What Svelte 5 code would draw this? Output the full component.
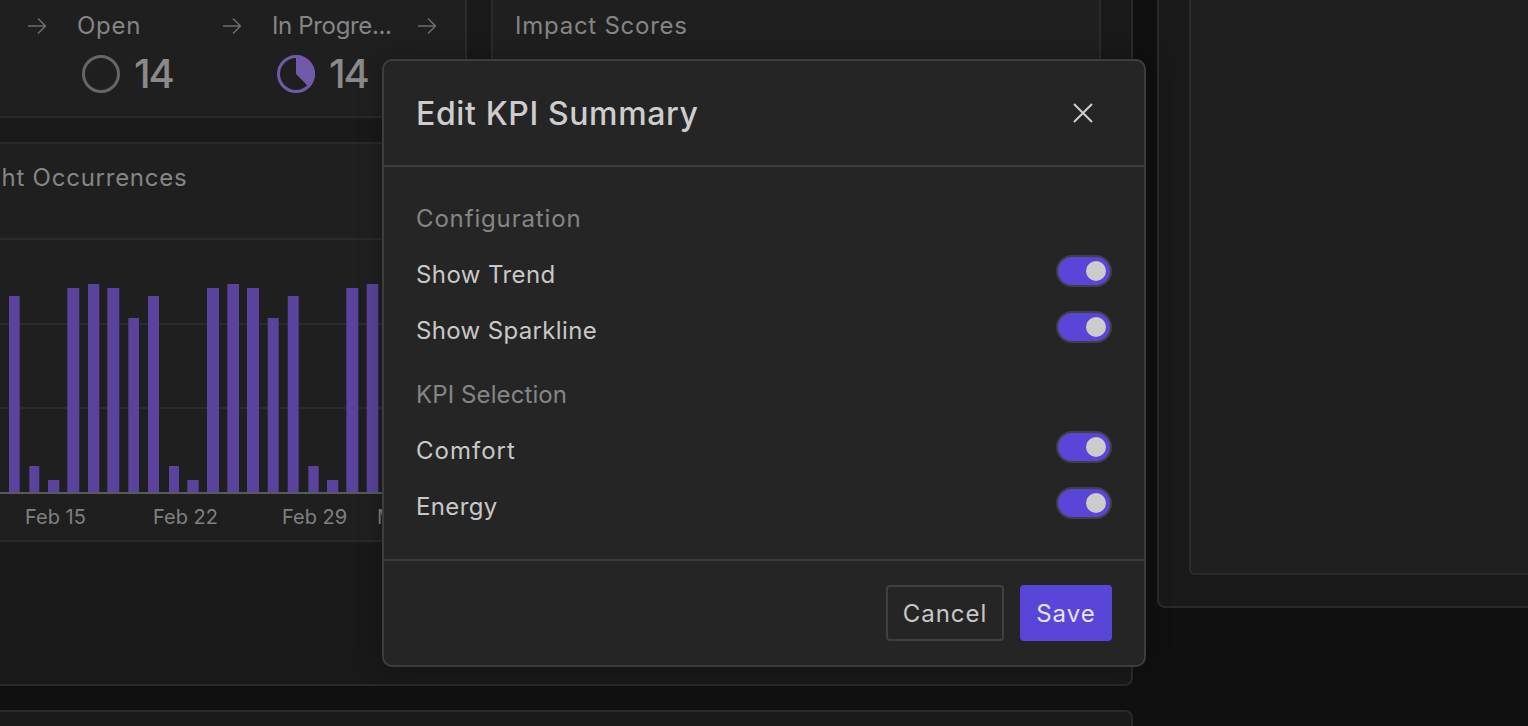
<script>
  const bars = [
    [9, 10.7, 296], [29.3, 10, 466], [48, 11.3, 480], [67.3, 12, 288], [88, 11.3, 284], [107.3, 12, 288],
    [128.3, 10.7, 318], [148, 11, 296], [169, 10, 466], [187.3, 11.4, 480], [207, 12, 288], [227.3, 11.7, 284],
    [247, 12, 288], [267.7, 11, 318], [287.7, 11, 296], [308.3, 10.4, 466], [327, 11.3, 480], [346.3, 12, 288],
    [366.7, 11.6, 284]
  ];
  const ticks = [[25, 'Feb 15'], [153, 'Feb 22'], [282, 'Feb 29'], [377, 'Mar 7']];
  const steps = [
    { label: 'Open', value: 14, kind: 'open', ls: 0.7 },
    { label: 'In Progre...', value: 14, kind: 'progress', ls: -0.35 }
  ];
  const sections = [
    { title: 'Configuration', ls: 0.85, rows: [['Show Trend', 0.4], ['Show Sparkline', 0.35]] },
    { title: 'KPI Selection', ls: 0.1, rows: [['Comfort', 1], ['Energy', 0.35]] }
  ];
</script>

{#snippet arrow()}
  <svg class="arrow" width="18" height="16" viewBox="0 0 18 16" fill="none" stroke="#6e6e6e" stroke-width="1.5"><path d="M0 8H17.5M10 .5L17.5 8L10 15.5" /></svg>
{/snippet}

<div class="page">
  <div class="shell">
    <div class="left">
      <section class="panel main">
        <div class="toprow">
          <div class="card status">
            {#each steps as s}
              <div class="step">
                {@render arrow()}
                <span class="steplabel" style="letter-spacing:{s.ls}px">{s.label}</span>
                <div class="value">
                  {#if s.kind === 'open'}
                    <svg width="38" height="38" viewBox="0 0 38 38" fill="none"><circle cx="19" cy="19" r="17.5" stroke="#666" stroke-width="3" /></svg>
                  {:else}
                    <svg width="38" height="38" viewBox="0 0 38 38" fill="none"><circle cx="19" cy="19" r="17.5" stroke="#7059a8" stroke-width="3" /><path d="M19 19V0A19 19 0 0 1 32.4 32.4Z" fill="#7059a8" /></svg>
                  {/if}
                  <span class="num">{s.value}</span>
                </div>
              </div>
            {/each}
            <div class="step">{@render arrow()}</div>
          </div>
          <div class="card impact"><h3>Impact Scores</h3></div>
        </div>
        <div class="card chart">
          <h3 class="charttitle">Insight Occurrences</h3>
          <svg class="plot" width="1465" height="303" viewBox="-366 240 1465 303">
            <line x1="-366" x2="1099" y1="324" y2="324" stroke="#2a2a2a" stroke-width="2" />
            <line x1="-366" x2="1099" y1="408" y2="408" stroke="#2a2a2a" stroke-width="2" />
            {#each bars as b}
              <rect x={b[0]} y={b[2]} width={b[1]} height={492 - b[2]} fill="#5a439c" />
            {/each}
            <line x1="-366" x2="1099" y1="493" y2="493" stroke="#5a5a58" stroke-width="2" />
            {#each ticks as t}
              <text x={t[0]} y="524" class="tick">{t[1]}</text>
            {/each}
          </svg>
        </div>
      </section>
      <section class="panel next"></section>
    </div>
    <section class="panel side"><div class="card sideinner"></div></section>
  </div>

  <div class="modal">
    <header class="mhead">
      <h2>Edit KPI Summary</h2>
      <svg width="20" height="20" viewBox="0 0 20 20" fill="none" stroke="#cfcfcf" stroke-width="2"><path d="M1 1L19 19M19 1L1 19" /></svg>
    </header>
    <div class="mbody">
      {#each sections as sec, i}
        <div class="seclabel" class:later={i > 0} style="letter-spacing:{sec.ls}px">{sec.title}</div>
        {#each sec.rows as r}
          <div class="row">
            <span style="letter-spacing:{r[1]}px">{r[0]}</span>
            <span class="toggle"><span class="knob"></span></span>
          </div>
        {/each}
      {/each}
    </div>
    <footer class="mfoot">
      <button class="btn cancel">Cancel</button>
      <button class="btn save">Save</button>
    </footer>
  </div>
</div>

<style>
  :global(body) {
    margin: 0;
    background: #101010;
    font-family: Inter, "Open Sans", "Liberation Sans", sans-serif;
  }
  .page {
    position: relative;
    width: 1528px;
    height: 726px;
    overflow: hidden;
    background: #101010;
  }
  .shell {
    display: grid;
    grid-template-columns: 1533px 800px;
    column-gap: 24px;
    align-items: start;
    margin: -60px 0 0 -400px;
  }
  .left {
    display: flex;
    flex-direction: column;
    gap: 24px;
  }
  .panel {
    box-sizing: border-box;
    background: #191919;
    border: 2px solid #2a2a2a;
    border-radius: 8px;
  }
  .main {
    height: 746px;
    padding: 30px;
    display: flex;
    flex-direction: column;
    gap: 24px;
  }
  .next { height: 100px; }
  .side {
    height: 668px;
    padding: 30px;
  }
  .card {
    box-sizing: border-box;
    background: #1f1f1f;
    border: 2px solid #2a2a2a;
    border-radius: 6px;
  }
  .sideinner { height: 603px; }
  .toprow {
    display: grid;
    grid-template-columns: 835px 1fr;
    gap: 24px;
  }
  .status {
    height: 146px;
    display: flex;
    overflow: hidden;
    padding: 34px 0 0 394px;
  }
  .step {
    flex: 0 0 195px;
    display: grid;
    grid-template-columns: 18px 1fr;
    column-gap: 31px;
    row-gap: 6px;
    grid-template-rows: 36px 48px;
    align-items: center;
  }
  .steplabel {
    font-size: 24px;
    line-height: 36px;
    color: #858585;
    white-space: nowrap;
  }
  .value {
    grid-column: 2;
    display: flex;
    align-items: center;
    gap: 14px;
    padding-left: 5px;
  }
  .num {
    font-size: 40px;
    font-weight: 500;
    color: #8a8a8a;
    line-height: 48px;
    letter-spacing: -2px;
  }
  h3 {
    margin: 0;
    font-size: 24px;
    line-height: 36px;
    font-weight: 400;
    color: #858585;
    letter-spacing: 0.75px;
  }
  .impact { padding: 34px 22px; }
  .chart {
    height: 400px;
    overflow: hidden;
  }
  .charttitle {
    box-sizing: border-box;
    height: 96px;
    padding: 16px 0 0 310px;
    border-bottom: 2px solid #2a2a2a;
    white-space: nowrap;
  }
  .plot { display: block; }
  .tick {
    font-size: 20px;
    fill: #808080;
    font-family: Inter, sans-serif;
  }
  .modal {
    position: absolute;
    left: 382px;
    top: 59px;
    width: 764px;
    height: 608px;
    box-sizing: border-box;
    background: #252525;
    border: 2px solid #3d3d3d;
    border-radius: 10px;
    box-shadow: 0 0 24px rgba(0, 0, 0, 0.25);
    display: flex;
    flex-direction: column;
  }
  .mhead {
    height: 106px;
    flex: none;
    box-sizing: border-box;
    display: flex;
    align-items: center;
    justify-content: space-between;
    padding: 0 51px 0 32px;
    border-bottom: 2px solid #3d3d3d;
  }
  h2 {
    margin: 0;
    font-size: 32px;
    font-weight: 500;
    color: #cdcdcd;
    letter-spacing: 0.62px;
  }
  .mbody {
    flex: 1;
    box-sizing: border-box;
    padding: 34px 32px 0;
  }
  .seclabel {
    font-size: 24px;
    line-height: 36px;
    color: #858585;
    margin-bottom: 10px;
  }
  .seclabel.later { margin-top: 18px; }
  .row {
    height: 56px;
    display: flex;
    justify-content: space-between;
    align-items: flex-start;
    font-size: 24px;
    line-height: 56px;
    color: #c8c8c8;
  }
  .toggle {
    box-sizing: border-box;
    width: 56px;
    height: 32px;
    margin-top: 8px;
    background: #5945d8;
    border: 2px solid #404040;
    border-radius: 16px;
    display: flex;
    align-items: center;
    justify-content: flex-end;
    padding-right: 4px;
  }
  .knob {
    width: 20px;
    height: 20px;
    border-radius: 50%;
    background: #cccccc;
  }
  .mfoot {
    flex: none;
    box-sizing: border-box;
    height: 106px;
    padding: 24px 32px 0;
    border-top: 2px solid #3d3d3d;
    display: flex;
    justify-content: flex-end;
    gap: 16px;
  }
  .btn {
    box-sizing: border-box;
    height: 56px;
    font: 400 24px Inter, sans-serif;
    border-radius: 4px;
    padding: 0;
    letter-spacing: 1px;
  }
  .cancel {
    width: 118px;
    background: transparent;
    border: 2px solid #404040;
    color: #c8c8c8;
  }
  .save {
    width: 92px;
    background: #5945d8;
    border: none;
    color: #e6e3f6;
  }
</style>
